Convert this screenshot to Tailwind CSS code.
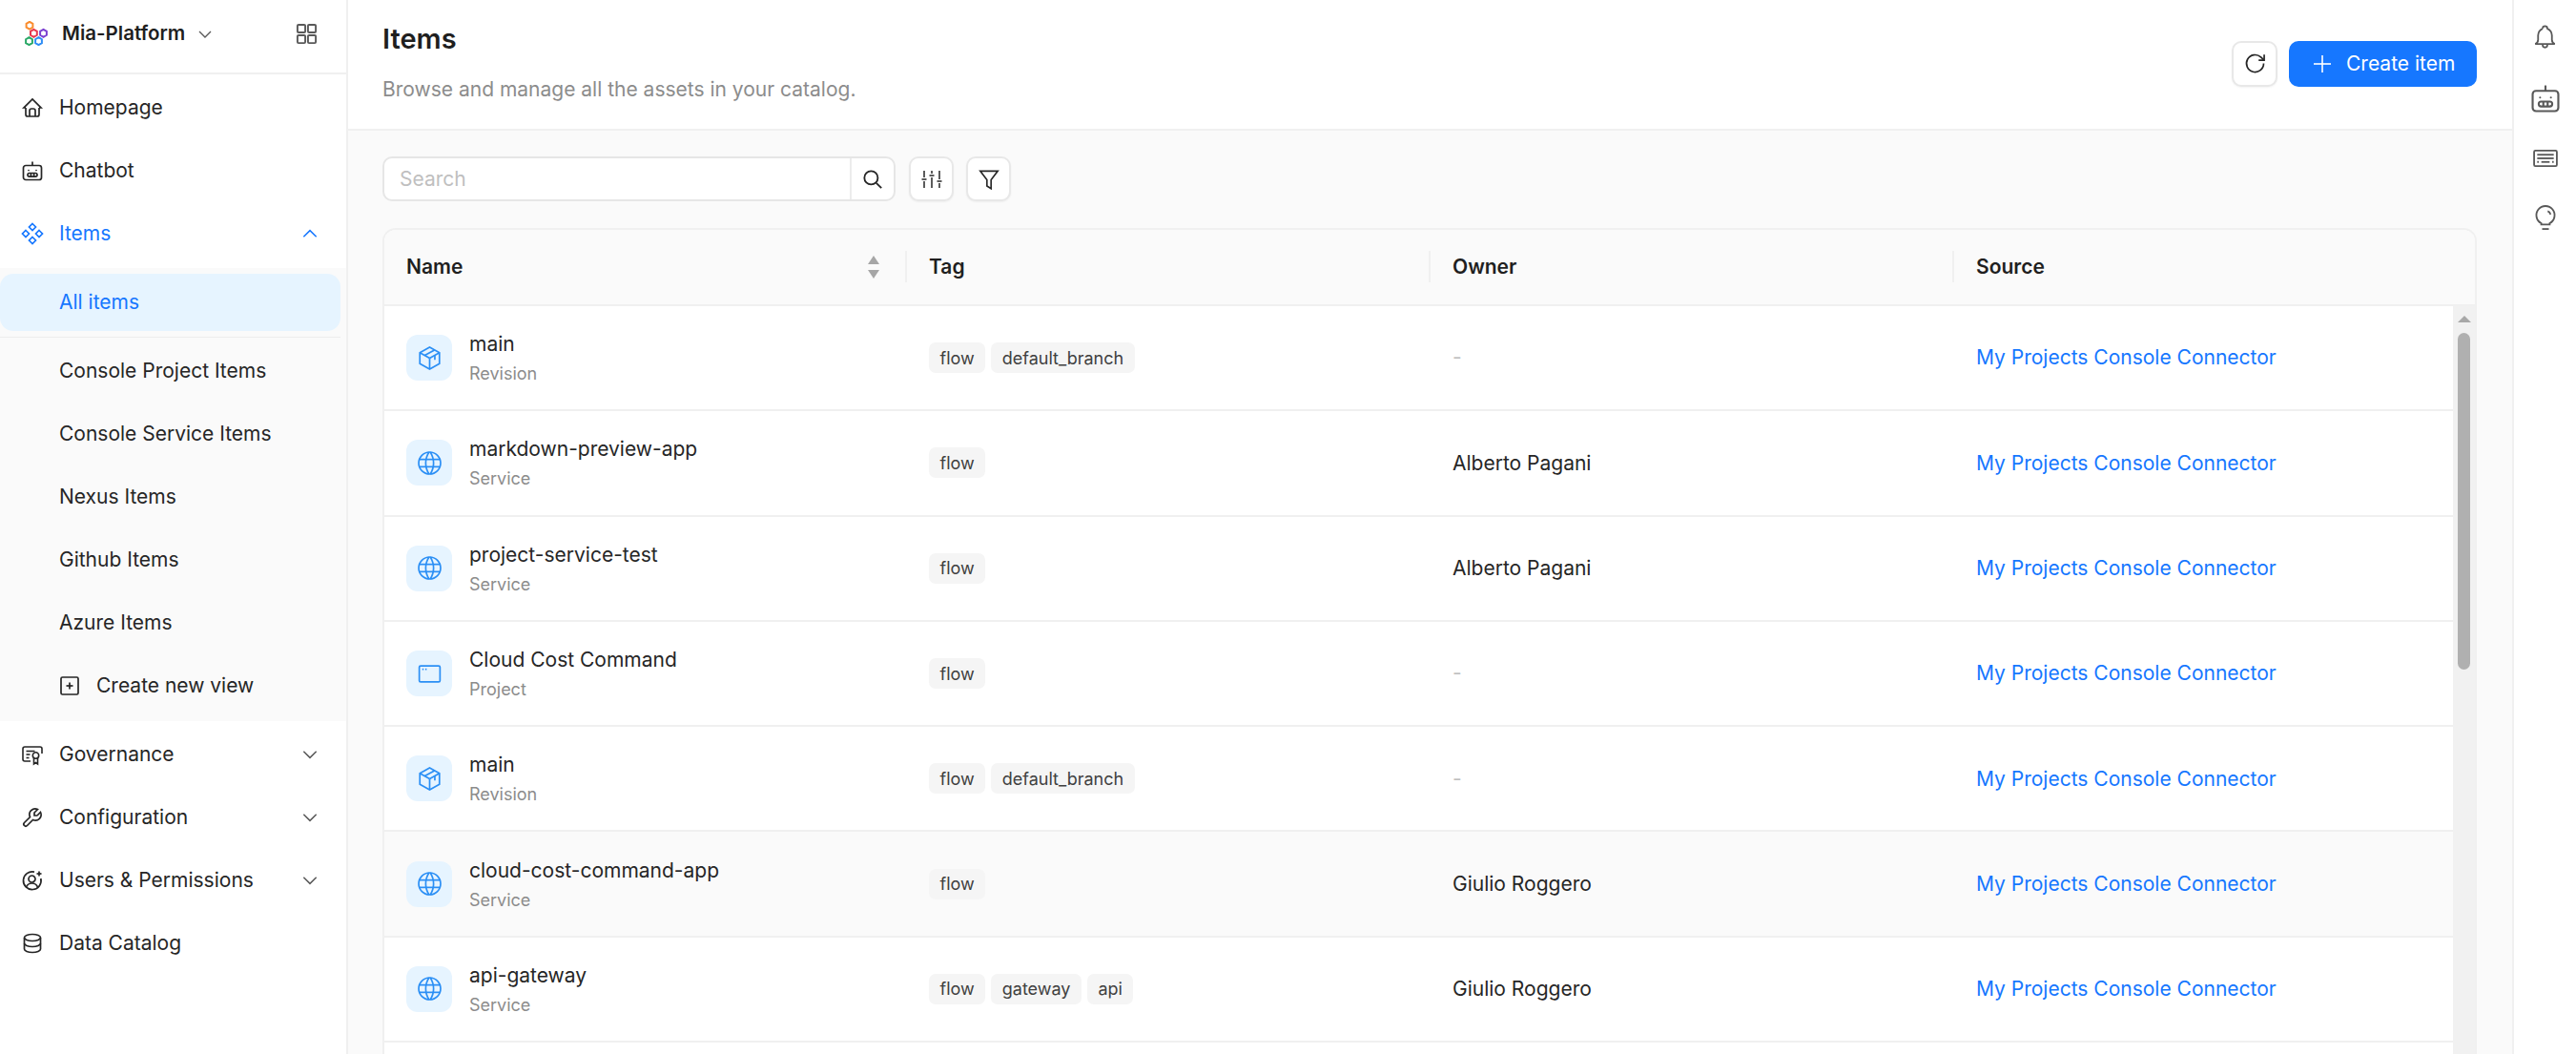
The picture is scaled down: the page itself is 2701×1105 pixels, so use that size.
<!DOCTYPE html>
<html lang="en">
  <head>
    <meta charset="UTF-8" />
    <title>Items</title>
    <script src="https://cdn.jsdelivr.net/npm/@tailwindcss/browser@4"></script>
  </head>
  <body class="[font-family:Inter,sans-serif] text-[21px] text-[#262626] bg-white">
    <!-- shared icons -->
    <svg class="hidden">
      <defs>
        <symbol id="i-chevron-down" viewBox="0 0 24 24"><path d="M4 8l8 8l8 -8" /></symbol>
        <symbol id="i-chevron-up" viewBox="0 0 24 24"><path d="M4 16l8 -8l8 8" /></symbol>
        <symbol id="i-home" viewBox="0 0 24 24"><path d="M5 12l-2 0l9 -9l9 9l-2 0" /><path d="M5 12v7a2 2 0 0 0 2 2h10a2 2 0 0 0 2 -2v-7" /><path d="M9 21v-6a2 2 0 0 1 2 -2h2a2 2 0 0 1 2 2v6" /></symbol>
        <symbol id="i-robot" viewBox="0 0 24 24"><rect x="2.5" y="6.5" width="19" height="15" rx="2.5" /><path d="M12 6.5v-4" /><path d="M8 11.5h.01" stroke-linecap="round" /><path d="M16 11.5h.01" stroke-linecap="round" /><rect x="7" y="14.5" width="10" height="3.6" rx="1.8" /><path d="M10.4 14.5v3.6" /><path d="M13.6 14.5v3.6" /></symbol>
        <symbol id="i-diamonds" viewBox="0 0 24 24"><path d="M12 1.5l3.5 3.5l-3.5 3.5l-3.5 -3.5z" /><path d="M5 8.5l3.5 3.5l-3.5 3.5l-3.5 -3.5z" /><path d="M19 8.5l3.5 3.5l-3.5 3.5l-3.5 -3.5z" /><path d="M12 15.5l3.5 3.5l-3.5 3.5l-3.5 -3.5z" /></symbol>
        <symbol id="i-cert" viewBox="0 0 24 24"><path d="M15.5 13m-3.2 0a3.2 3.2 0 1 0 6.4 0a3.2 3.2 0 1 0 -6.4 0" /><path d="M13.5 16v6l2 -1.5l2 1.5v-6" /><path d="M10 19h-6a2 2 0 0 1 -2 -2v-11a2 2 0 0 1 2 -2h16a2 2 0 0 1 2 2v5" /><path d="M5.5 8.5h9" /><path d="M5.5 12h4" /><path d="M5.5 15.5h3" /></symbol>
        <symbol id="i-tool" viewBox="0 0 24 24"><path transform="matrix(-1 0 0 1 24 0)" d="M7 10h3v-3l-3.5 -3.5a6 6 0 0 1 8 8l6 6a2 2 0 0 1 -3 3l-6 -6a6 6 0 0 1 -8 -8l3.5 3.5" /></symbol>
        <symbol id="i-user" viewBox="0 0 24 24"><path d="M14 3.2a9.3 9.3 0 1 0 6.8 6.8" /><path d="M11.5 10.5m-3.5 0a3.5 3.5 0 1 0 7 0a3.5 3.5 0 1 0 -7 0" /><path d="M5.5 19a6.5 6.5 0 0 1 12 0" /><path d="M19 2.5v5" /><path d="M16.5 5h5" /></symbol>
        <symbol id="i-db" viewBox="0 0 24 24"><path d="M12 6m-8.5 0a8.5 3.5 0 1 0 17 0a8.5 3.5 0 1 0 -17 0" /><path d="M3.5 6v6a8.5 3.5 0 0 0 17 0v-6" /><path d="M3.5 12v6a8.5 3.5 0 0 0 17 0v-6" /></symbol>
        <symbol id="i-square-plus" viewBox="0 0 24 24"><rect x="3" y="3" width="18" height="18" rx="1.5" /><path d="M8.5 12h7" /><path d="M12 8.5v7" /></symbol>
        <symbol id="i-package" viewBox="0 0 24 24"><path d="M12 2.5l8.5 4.7v9.6l-8.5 4.7l-8.5 -4.7v-9.6z" /><path d="M12 12l8.5 -4.8" /><path d="M12 12v9.5" /><path d="M12 12l-8.5 -4.8" /><path d="M16.2 4.9l-8.4 4.7" /><path d="M16.5 10v3.5" /></symbol>
        <symbol id="i-world" viewBox="0 0 24 24"><path d="M2.5 12a9.5 9.5 0 1 0 19 0a9.5 9.5 0 0 0 -19 0" /><path d="M3.2 8.8h17.6" /><path d="M3.2 15.2h17.6" /><path d="M11.5 2.5a17 17 0 0 0 0 19" /><path d="M12.5 2.5a17 17 0 0 1 0 19" /></symbol>
        <symbol id="i-window" viewBox="0 0 24 24"><rect x="3" y="5" width="18" height="14" rx="1.2" /><path d="M5.6 8h1.2" /><path d="M8.2 8h1.2" /></symbol>
      </defs>
    </svg>

    <div class="flex h-screen overflow-hidden">
      <!-- sidebar -->
      <aside class="w-[365px] shrink-0 border-r-2 border-[#f0f0f0] flex flex-col">
        <div class="h-[78px] shrink-0 border-b-2 border-[#f0f0f0] flex items-center pl-[25px] pr-[30px] pb-[6px]">
          <svg class="w-[26px] h-[26px]" viewBox="0 0 26 26" fill="none" stroke-width="2">
            <path stroke="#fa8c2c" d="M6 0.8l3.4 2v3.9l-3.4 2l-3.4 -2v-3.9z" />
            <path stroke="#e8384f" d="M10.4 8.9l3.4 2v3.9l-3.4 2l-3.4 -2v-3.9z" />
            <path stroke="#7a3fd0" d="M20.5 8.9l3.4 2v3.9l-3.4 2l-3.4 -2v-3.9z" />
            <path stroke="#2aa866" d="M5.5 17.2l3.4 2v3.9l-3.4 2l-3.4 -2v-3.9z" />
            <path stroke="#2f8df5" d="M15.5 17.2l3.4 2v3.9l-3.4 2l-3.4 -2v-3.9z" />
          </svg>
          <span class="ml-[14px] text-[20.5px] font-semibold text-[#1f1f1f]">Mia-Platform</span>
          <svg class="ml-[12px] mt-[2px] w-[18px] h-[18px] text-[#595959]" fill="none" stroke="currentColor" stroke-width="1.8"><use href="#i-chevron-down" /></svg>
          <svg class="ml-auto w-[23px] h-[23px] text-[#595959]" viewBox="0 0 24 24" fill="none" stroke="currentColor" stroke-width="2"><rect x="2" y="2" width="8.5" height="8.5" rx="1.2" /><rect x="13.5" y="2" width="8.5" height="8.5" rx="1.2" /><rect x="2" y="13.5" width="8.5" height="8.5" rx="1.2" /><rect x="13.5" y="13.5" width="8.5" height="8.5" rx="1.2" /></svg>
        </div>

        <nav class="pt-[2px] flex flex-col">
          <div class="h-[66px] flex items-center pl-[22px] gap-[16px]">
            <svg class="w-[24px] h-[24px] text-[#262626]" fill="none" stroke="currentColor" stroke-width="1.7"><use href="#i-home" /></svg>
            <span>Homepage</span>
          </div>
          <div class="h-[66px] flex items-center pl-[22px] gap-[16px]">
            <svg class="w-[24px] h-[24px] text-[#262626]" fill="none" stroke="currentColor" stroke-width="1.7"><use href="#i-robot" /></svg>
            <span>Chatbot</span>
          </div>
          <div class="h-[66px] flex items-center pl-[22px] pr-[28px] gap-[16px] text-[#1677ff]">
            <svg class="w-[24px] h-[24px]" fill="none" stroke="currentColor" stroke-width="1.7"><use href="#i-diamonds" /></svg>
            <span>Items</span>
            <svg class="ml-auto w-[20px] h-[20px]" fill="none" stroke="currentColor" stroke-width="1.8"><use href="#i-chevron-up" /></svg>
          </div>

          <div class="mt-[3px] bg-[#fafafa] pt-[6px] pb-[4px] flex flex-col">
            <div class="h-[60px] mr-[6px] rounded-[14px] bg-[#e6f4ff] text-[#1677ff] flex items-center pl-[62px]">All items</div>
            <div class="mt-[6px] mr-[6px] h-px bg-[#ededed]"></div>
            <div class="mt-[2px] h-[66px] flex items-center pl-[62px]">Console Project Items</div>
            <div class="h-[66px] flex items-center pl-[62px]">Console Service Items</div>
            <div class="h-[66px] flex items-center pl-[62px]">Nexus Items</div>
            <div class="h-[66px] flex items-center pl-[62px]">Github Items</div>
            <div class="h-[66px] flex items-center pl-[62px]">Azure Items</div>
            <div class="h-[66px] flex items-center pl-[61px] gap-[16px]">
              <svg class="w-[24px] h-[24px] text-[#262626]" fill="none" stroke="currentColor" stroke-width="1.7"><use href="#i-square-plus" /></svg>
              <span>Create new view</span>
            </div>
          </div>

          <div class="mt-[2px] h-[66px] flex items-center pl-[22px] pr-[28px] gap-[16px]">
            <svg class="w-[24px] h-[24px] text-[#262626]" fill="none" stroke="currentColor" stroke-width="1.6"><use href="#i-cert" /></svg>
            <span>Governance</span>
            <svg class="ml-auto w-[20px] h-[20px] text-[#595959]" fill="none" stroke="currentColor" stroke-width="1.8"><use href="#i-chevron-down" /></svg>
          </div>
          <div class="h-[66px] flex items-center pl-[22px] pr-[28px] gap-[16px]">
            <svg class="w-[24px] h-[24px] text-[#262626]" fill="none" stroke="currentColor" stroke-width="1.7"><use href="#i-tool" /></svg>
            <span>Configuration</span>
            <svg class="ml-auto w-[20px] h-[20px] text-[#595959]" fill="none" stroke="currentColor" stroke-width="1.8"><use href="#i-chevron-down" /></svg>
          </div>
          <div class="h-[66px] flex items-center pl-[22px] pr-[28px] gap-[16px]">
            <svg class="w-[24px] h-[24px] text-[#262626]" fill="none" stroke="currentColor" stroke-width="1.7"><use href="#i-user" /></svg>
            <span>Users &amp; Permissions</span>
            <svg class="ml-auto w-[20px] h-[20px] text-[#595959]" fill="none" stroke="currentColor" stroke-width="1.8"><use href="#i-chevron-down" /></svg>
          </div>
          <div class="h-[66px] flex items-center pl-[22px] gap-[16px]">
            <svg class="w-[24px] h-[24px] text-[#262626]" fill="none" stroke="currentColor" stroke-width="1.7"><use href="#i-db" /></svg>
            <span>Data Catalog</span>
          </div>
        </nav>
      </aside>

      <!-- main -->
      <main class="flex-1 min-w-0 flex flex-col">
        <header class="h-[137px] shrink-0 border-b-2 border-[#f0f0f0] flex items-center justify-between pl-[36px] pr-[37px] pb-[6px]">
          <div>
            <h1 class="text-[29px] leading-[40px] font-semibold text-[#1f1f1f]">Items</h1>
            <p class="mt-[18px] leading-[30px] text-[#8c8c8c]">Browse and manage all the assets in your catalog.</p>
          </div>
          <div class="flex items-center gap-[12px] mt-[4px]">
            <button class="w-[48px] h-[48px] rounded-[10px] border-2 border-[#e8e8e8] bg-white shadow-xs flex items-center justify-center">
              <svg class="w-[27px] h-[27px] text-[#262626]" viewBox="0 0 24 24" fill="none" stroke="currentColor" stroke-width="1.5"><path d="M20 12a8 8 0 1 1 -2.6 -5.9l2.6 2.4" /><path d="M20.5 3.8v5.2h-5.2" /></svg>
            </button>
            <button class="w-[197px] h-[48px] rounded-[10px] bg-[#1677ff] text-white flex items-center pl-[25px] gap-[15px]">
              <svg class="w-[20px] h-[20px]" viewBox="0 0 20 20" fill="none" stroke="currentColor" stroke-width="1.6"><path d="M10 1v18" /><path d="M1 10h18" /></svg>
              <span>Create item</span>
            </button>
          </div>
        </header>

        <section class="flex-1 min-h-0 bg-[#fafafa] pt-[27px] pl-[36px] pr-[37px] flex flex-col">
          <div class="h-[47px] shrink-0 flex items-stretch">
            <div class="w-[538px] flex rounded-[10px] border-2 border-[#e6e6e6] bg-white">
              <span class="flex-1 pl-[16px] flex items-center text-[#bfbfbf]">Search</span>
              <span class="w-[46px] border-l-2 border-[#ececec] flex items-center justify-center">
                <svg class="w-[26px] h-[26px] text-[#262626]" viewBox="0 0 24 24" fill="none" stroke="currentColor" stroke-width="1.7"><circle cx="10.5" cy="10.5" r="6.5" /><path d="M15.5 15.5l5 5" /></svg>
              </span>
            </div>
            <button class="ml-[14px] w-[47px] rounded-[10px] border-2 border-[#e8e8e8] bg-white shadow-xs flex items-center justify-center">
              <svg class="w-[24px] h-[24px] text-[#262626]" viewBox="0 0 24 24" fill="none" stroke="currentColor" stroke-width="1.5"><path d="M4 3v7" /><path d="M4 14v7" /><path d="M1.5 12h5" /><path d="M12 3v3" /><path d="M12 10v11" /><path d="M9.5 8h5" /><path d="M20 3v9" /><path d="M20 16v5" /><path d="M17.5 14h5" /></svg>
            </button>
            <button class="ml-[13px] w-[47px] rounded-[10px] border-2 border-[#e8e8e8] bg-white shadow-xs flex items-center justify-center">
              <svg class="w-[26px] h-[26px] text-[#262626]" viewBox="0 0 24 24" fill="none" stroke="currentColor" stroke-width="1.5"><path d="M3.5 4h17l-6.5 8.5v8.5l-4 -2.5v-6z" /></svg>
            </button>
          </div>

          <!-- table -->
          <div class="mt-[28px] flex-1 min-h-0 flex flex-col rounded-t-[14px] border-x-2 border-t-2 border-[#f0f0f0] bg-white overflow-hidden">
            <div class="h-[81px] shrink-0 bg-[#fafafa] border-b-2 border-[#f0f0f0] flex items-center font-semibold text-[#1f1f1f] -mt-px">
              <div class="w-[546px] pl-[23px] pr-[26px] flex items-center justify-between">
                <span>Name</span>
                <svg class="w-[14px] h-[26px] text-[#a6a6a6]" viewBox="0 0 14 26" fill="currentColor"><path d="M7 1l6 9h-12z" /><path d="M7 25l-6 -9h12z" /></svg>
              </div>
              <div class="w-[549px] flex items-center"><span class="w-[2px] h-[33px] bg-[#f0f0f0]"></span><span class="ml-[23px]">Tag</span></div>
              <div class="w-[549px] flex items-center"><span class="w-[2px] h-[33px] bg-[#f0f0f0]"></span><span class="ml-[23px]">Owner</span></div>
              <div class="flex items-center"><span class="w-[2px] h-[33px] bg-[#f0f0f0]"></span><span class="ml-[23px]">Source</span></div>
            </div>

            <div class="flex-1 min-h-0 flex">
              <div class="flex-1 min-w-0">
                <!-- row -->
                <div class="h-[110.3px] border-b-2 border-[#f0f0f0] flex items-center">
                  <div class="w-[546px] pl-[23px] flex items-center gap-[18px]">
                    <span class="w-[48px] h-[48px] rounded-[12px] bg-[#e6f4ff] flex items-center justify-center"><svg class="w-[29px] h-[29px] text-[#2b8ff5]" fill="none" stroke="currentColor" stroke-width="1.4"><use href="#i-package" /></svg></span>
                    <div class="flex flex-col pt-[2px]"><span class="leading-[30px]">main</span><span class="mt-[2px] text-[18px] leading-[28px] text-[#8c8c8c]">Revision</span></div>
                  </div>
                  <div class="w-[549px] pl-[25px] flex gap-[6px]">
                    <span class="h-[32px] px-[11.5px] rounded-[7px] bg-[#f5f5f5] text-[18px] text-[#404040] flex items-center">flow</span>
                    <span class="h-[32px] px-[11.5px] rounded-[7px] bg-[#f5f5f5] text-[18px] text-[#404040] flex items-center">default_branch</span>
                  </div>
                  <div class="w-[549px] pl-[25px] text-[#bfbfbf]">-</div>
                  <div class="pl-[25px] text-[#1677ff]">My Projects Console Connector</div>
                </div>
                <div class="h-[110.3px] border-b-2 border-[#f0f0f0] flex items-center">
                  <div class="w-[546px] pl-[23px] flex items-center gap-[18px]">
                    <span class="w-[48px] h-[48px] rounded-[12px] bg-[#e6f4ff] flex items-center justify-center"><svg class="w-[29px] h-[29px] text-[#2b8ff5]" fill="none" stroke="currentColor" stroke-width="1.4"><use href="#i-world" /></svg></span>
                    <div class="flex flex-col pt-[2px]"><span class="leading-[30px]">markdown-preview-app</span><span class="mt-[2px] text-[18px] leading-[28px] text-[#8c8c8c]">Service</span></div>
                  </div>
                  <div class="w-[549px] pl-[25px] flex gap-[6px]">
                    <span class="h-[32px] px-[11.5px] rounded-[7px] bg-[#f5f5f5] text-[18px] text-[#404040] flex items-center">flow</span>
                  </div>
                  <div class="w-[549px] pl-[25px]">Alberto Pagani</div>
                  <div class="pl-[25px] text-[#1677ff]">My Projects Console Connector</div>
                </div>
                <div class="h-[110.3px] border-b-2 border-[#f0f0f0] flex items-center">
                  <div class="w-[546px] pl-[23px] flex items-center gap-[18px]">
                    <span class="w-[48px] h-[48px] rounded-[12px] bg-[#e6f4ff] flex items-center justify-center"><svg class="w-[29px] h-[29px] text-[#2b8ff5]" fill="none" stroke="currentColor" stroke-width="1.4"><use href="#i-world" /></svg></span>
                    <div class="flex flex-col pt-[2px]"><span class="leading-[30px]">project-service-test</span><span class="mt-[2px] text-[18px] leading-[28px] text-[#8c8c8c]">Service</span></div>
                  </div>
                  <div class="w-[549px] pl-[25px] flex gap-[6px]">
                    <span class="h-[32px] px-[11.5px] rounded-[7px] bg-[#f5f5f5] text-[18px] text-[#404040] flex items-center">flow</span>
                  </div>
                  <div class="w-[549px] pl-[25px]">Alberto Pagani</div>
                  <div class="pl-[25px] text-[#1677ff]">My Projects Console Connector</div>
                </div>
                <div class="h-[110.3px] border-b-2 border-[#f0f0f0] flex items-center">
                  <div class="w-[546px] pl-[23px] flex items-center gap-[18px]">
                    <span class="w-[48px] h-[48px] rounded-[12px] bg-[#e6f4ff] flex items-center justify-center"><svg class="w-[29px] h-[29px] text-[#2b8ff5]" fill="none" stroke="currentColor" stroke-width="1.4"><use href="#i-window" /></svg></span>
                    <div class="flex flex-col pt-[2px]"><span class="leading-[30px]">Cloud Cost Command</span><span class="mt-[2px] text-[18px] leading-[28px] text-[#8c8c8c]">Project</span></div>
                  </div>
                  <div class="w-[549px] pl-[25px] flex gap-[6px]">
                    <span class="h-[32px] px-[11.5px] rounded-[7px] bg-[#f5f5f5] text-[18px] text-[#404040] flex items-center">flow</span>
                  </div>
                  <div class="w-[549px] pl-[25px] text-[#bfbfbf]">-</div>
                  <div class="pl-[25px] text-[#1677ff]">My Projects Console Connector</div>
                </div>
                <div class="h-[110.3px] border-b-2 border-[#f0f0f0] flex items-center">
                  <div class="w-[546px] pl-[23px] flex items-center gap-[18px]">
                    <span class="w-[48px] h-[48px] rounded-[12px] bg-[#e6f4ff] flex items-center justify-center"><svg class="w-[29px] h-[29px] text-[#2b8ff5]" fill="none" stroke="currentColor" stroke-width="1.4"><use href="#i-package" /></svg></span>
                    <div class="flex flex-col pt-[2px]"><span class="leading-[30px]">main</span><span class="mt-[2px] text-[18px] leading-[28px] text-[#8c8c8c]">Revision</span></div>
                  </div>
                  <div class="w-[549px] pl-[25px] flex gap-[6px]">
                    <span class="h-[32px] px-[11.5px] rounded-[7px] bg-[#f5f5f5] text-[18px] text-[#404040] flex items-center">flow</span>
                    <span class="h-[32px] px-[11.5px] rounded-[7px] bg-[#f5f5f5] text-[18px] text-[#404040] flex items-center">default_branch</span>
                  </div>
                  <div class="w-[549px] pl-[25px] text-[#bfbfbf]">-</div>
                  <div class="pl-[25px] text-[#1677ff]">My Projects Console Connector</div>
                </div>
                <div class="h-[110.3px] border-b-2 border-[#f0f0f0] bg-[#fafafa] flex items-center">
                  <div class="w-[546px] pl-[23px] flex items-center gap-[18px]">
                    <span class="w-[48px] h-[48px] rounded-[12px] bg-[#e6f4ff] flex items-center justify-center"><svg class="w-[29px] h-[29px] text-[#2b8ff5]" fill="none" stroke="currentColor" stroke-width="1.4"><use href="#i-world" /></svg></span>
                    <div class="flex flex-col pt-[2px]"><span class="leading-[30px]">cloud-cost-command-app</span><span class="mt-[2px] text-[18px] leading-[28px] text-[#8c8c8c]">Service</span></div>
                  </div>
                  <div class="w-[549px] pl-[25px] flex gap-[6px]">
                    <span class="h-[32px] px-[11.5px] rounded-[7px] bg-[#f5f5f5] text-[18px] text-[#404040] flex items-center">flow</span>
                  </div>
                  <div class="w-[549px] pl-[25px]">Giulio Roggero</div>
                  <div class="pl-[25px] text-[#1677ff]">My Projects Console Connector</div>
                </div>
                <div class="h-[110.3px] border-b-2 border-[#f0f0f0] flex items-center">
                  <div class="w-[546px] pl-[23px] flex items-center gap-[18px]">
                    <span class="w-[48px] h-[48px] rounded-[12px] bg-[#e6f4ff] flex items-center justify-center"><svg class="w-[29px] h-[29px] text-[#2b8ff5]" fill="none" stroke="currentColor" stroke-width="1.4"><use href="#i-world" /></svg></span>
                    <div class="flex flex-col pt-[2px]"><span class="leading-[30px]">api-gateway</span><span class="mt-[2px] text-[18px] leading-[28px] text-[#8c8c8c]">Service</span></div>
                  </div>
                  <div class="w-[549px] pl-[25px] flex gap-[6px]">
                    <span class="h-[32px] px-[11.5px] rounded-[7px] bg-[#f5f5f5] text-[18px] text-[#404040] flex items-center">flow</span>
                    <span class="h-[32px] px-[11.5px] rounded-[7px] bg-[#f5f5f5] text-[18px] text-[#404040] flex items-center">gateway</span>
                    <span class="h-[32px] px-[11.5px] rounded-[7px] bg-[#f5f5f5] text-[18px] text-[#404040] flex items-center">api</span>
                  </div>
                  <div class="w-[549px] pl-[25px]">Giulio Roggero</div>
                  <div class="pl-[25px] text-[#1677ff]">My Projects Console Connector</div>
                </div>
              </div>
              <!-- scrollbar -->
              <div class="w-[23px] shrink-0 bg-[#f1f1f1] flex flex-col items-center pt-[10px]">
                <svg class="w-[14px] h-[7px] text-[#a8a8a8]" viewBox="0 0 14 7" fill="currentColor"><path d="M7 0l7 7h-14z" /></svg>
                <div class="mt-[11px] w-[13px] h-[353px] rounded-full bg-[#b0b0b0]"></div>
              </div>
            </div>
          </div>
        </section>
      </main>

      <!-- right rail -->
      <aside class="w-[67px] shrink-0 border-l-2 border-[#f0f0f0] flex flex-col items-center text-[#595959] pt-[8px]">
        <div class="h-[63px] flex items-center justify-center"><svg class="w-[29px] h-[29px]" viewBox="0 0 24 24" fill="none" stroke="currentColor" stroke-width="1.5"><path d="M10 4a2 2 0 1 1 4 0a7 7 0 0 1 4 6v4a4 4 0 0 0 2.5 3.5h-17a4 4 0 0 0 2.5 -3.5v-4a7 7 0 0 1 4 -6" /><path d="M10 18v.5a2 2 0 0 0 4 0v-.5" /></svg></div>
        <div class="h-[63px] flex items-center justify-center"><svg class="w-[34px] h-[34px]" fill="none" stroke="currentColor" stroke-width="1.5"><use href="#i-robot" /></svg></div>
        <div class="h-[63px] flex items-center justify-center"><svg class="w-[26px] h-[26px]" viewBox="0 0 24 24" fill="none" stroke="currentColor" stroke-width="1.7"><rect x="1" y="4.5" width="22" height="15" rx="1.2" /><path d="M4 8.5h16" /><path d="M4 12h16" /><path d="M4 15.5h1.5" /><path d="M8 15.5h8" /><path d="M18.5 15.5h1.5" /></svg></div>
        <div class="h-[63px] flex items-center justify-center"><svg class="w-[28px] h-[28px]" viewBox="0 0 24 24" fill="none" stroke="currentColor" stroke-width="1.6"><path d="M8.2 17.5v-1.2a8.2 8.2 0 1 1 7.6 0v1.2z" /><path d="M9 21.5h6" /><path d="M14 5.5a4 4 0 0 1 2.5 3" /></svg></div>
      </aside>
    </div>
  </body>
</html>
